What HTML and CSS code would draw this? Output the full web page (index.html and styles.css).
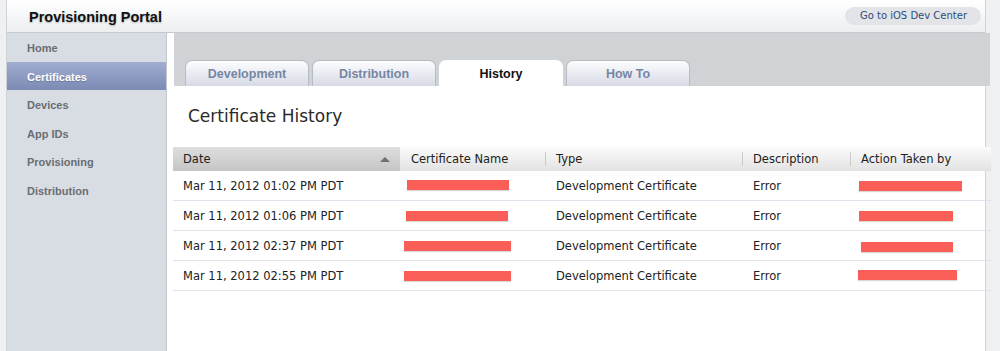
FILE: index.html
```html
<!DOCTYPE html>
<html>
  <head>
    <title>Provisioning Portal</title>
    <link rel="stylesheet" href="styles.css">
  </head>
  <body>
    <div class="page">
      <div class="header">
        <div class="title">Provisioning Portal</div>
        <a class="dev-center" href="#">Go to iOS Dev Center</a>
      </div>

      <div class="layout">
        <ul class="sidebar">
          <li>Home</li>
          <li class="active">Certificates</li>
          <li>Devices</li>
          <li>App IDs</li>
          <li>Provisioning</li>
          <li>Distribution</li>
        </ul>

        <div class="main">
          <div class="tab-band">
            <div class="tab">Development</div>
            <div class="tab">Distribution</div>
            <div class="tab current">History</div>
            <div class="tab">How To</div>
          </div>

          <h2 class="heading">Certificate History</h2>

          <table class="history">
            <thead>
              <tr>
                <th class="col-date sorted">
                  <div class="sort-head">Date <span class="sort-up"></span></div>
                </th>
                <th class="col-name first">Certificate Name</th>
                <th class="col-type">Type</th>
                <th class="col-desc">Description</th>
                <th class="col-action">Action Taken by</th>
              </tr>
            </thead>
            <tbody>
              <tr>
                <td>Mar 11, 2012 01:02 PM PDT</td>
                <td><span class="redact" style="width: 102px; margin-left: -4px; top: -1px"></span></td>
                <td>Development Certificate</td>
                <td>Error</td>
                <td><span class="redact" style="width: 103px; margin-left: -2px; top: 0px"></span></td>
              </tr>
              <tr>
                <td>Mar 11, 2012 01:06 PM PDT</td>
                <td><span class="redact" style="width: 102px; margin-left: -5px"></span></td>
                <td>Development Certificate</td>
                <td>Error</td>
                <td><span class="redact" style="width: 94px; margin-left: -2px"></span></td>
              </tr>
              <tr>
                <td>Mar 11, 2012 02:37 PM PDT</td>
                <td><span class="redact" style="width: 107px; margin-left: -7px"></span></td>
                <td>Development Certificate</td>
                <td>Error</td>
                <td><span class="redact" style="width: 92px; margin-left: 0px; top: 1px"></span></td>
              </tr>
              <tr>
                <td>Mar 11, 2012 02:55 PM PDT</td>
                <td><span class="redact" style="width: 107px; margin-left: -7px"></span></td>
                <td>Development Certificate</td>
                <td>Error</td>
                <td><span class="redact" style="width: 99px; margin-left: -3px; top: -1px"></span></td>
              </tr>
            </tbody>
          </table>
        </div>
      </div>
    </div>
  </body>
</html>
```

FILE: styles.css
```css
body {
  background: #eff0f2;
  color: #222;
  font-family: 'DejaVu Sans', sans-serif;
  margin: 0;
}

.page {
  background: #fff;
  border-left: 1px solid #cfd2d6;
  border-right: 1px solid #cfd2d6;
  margin-left: 6px;
  min-height: 351px;
  width: 978px;
}

.header {
  align-items: center;
  background: linear-gradient(#ffffff, #eceef0);
  border-bottom: 1px solid #c6cad0;
  display: flex;
  height: 32px;
  justify-content: space-between;
  padding-left: 22px;
  padding-right: 4px;
}

.title {
  color: #111;
  font-family: 'Liberation Sans', Arial, sans-serif;
  font-size: 14.5px;
  font-weight: bold;
  padding-top: 1px;
  text-shadow: 0 1px 2px rgba(0,0,0,0.25);
}

.dev-center {
  background: #e2e4e7;
  border-radius: 9px;
  color: #2f4d7c;
  font-size: 10px;
  line-height: 18px;
  margin-bottom: 1px;
  padding: 0 14px 0 15px;
  text-decoration: none;
}

.layout {
  display: flex;
  min-height: 318px;
}

.sidebar {
  background: #d8dde4;
  border-right: 1px solid #c3c8cf;
  list-style: none;
  margin: 0;
  padding: 0;
  width: 159px;
}

.sidebar li {
  color: #6a6d72;
  font-family: 'Liberation Sans', Arial, sans-serif;
  font-size: 11px;
  font-weight: bold;
  height: 28.5px;
  line-height: 30px;
  padding-left: 20px;
}

.sidebar li.active {
  background: linear-gradient(#a1add0, #7c8ab4);
  color: #fff;
  text-shadow: 0 1px 1px rgba(0,0,0,0.2);
}

.main {
  flex: 1;
  min-width: 0;
  padding-left: 6px;
}

.tab-band {
  align-items: flex-end;
  background: #d0d3d6;
  display: flex;
  gap: 3px;
  height: 53px;
  margin-left: 1px;
  margin-right: -5px;
  padding-left: 11px;
}

.tab {
  background: linear-gradient(#fdfdfe, #d6dae6);
  border: 1px solid #b7bbc3;
  border-bottom: none;
  border-radius: 7px 7px 0 0;
  box-sizing: border-box;
  color: #7786a2;
  font-family: 'Liberation Sans', Arial, sans-serif;
  font-size: 12.5px;
  font-weight: bold;
  height: 26px;
  line-height: 27px;
  text-align: center;
  width: 124px;
}

.tab.current {
  background: #fff;
  border-color: #fff;
  color: #111;
}

.heading {
  color: #2a2a2a;
  font-size: 17px;
  font-weight: normal;
  line-height: 20px;
  margin: 20px 0 21px 15px;
}

.history {
  border-collapse: collapse;
  font-size: 11.5px;
  table-layout: fixed;
  width: 818px;
}

.history th {
  background:
    linear-gradient(#cbcbcb, #cbcbcb) left center / 1px 14px no-repeat,
    linear-gradient(#fbfbfb, #e2e2e2);
  font-weight: normal;
  height: 24px;
  padding: 0 0 0 11px;
  text-align: left;
}

.history th.sorted {
  background: linear-gradient(#dedede, #c5c5c5);
  padding-left: 10px;
}

.history th.first {
  background: linear-gradient(#fbfbfb, #e2e2e2);
}

.sort-head {
  align-items: center;
  display: flex;
  justify-content: space-between;
  padding-right: 10px;
}

.sort-up {
  border-bottom: 5px solid #6f6f6f;
  border-left: 5px solid transparent;
  border-right: 5px solid transparent;
  height: 0;
  width: 0;
}

/* widths exclude the cell's left padding */
.col-date { width: 217px; }
.col-name { width: 134px; }
.col-type { width: 186px; }
.col-desc { width: 97px; }
.col-action { width: 130px; }

.history td {
  border-bottom: 1px solid #dfe1eb;
  height: 29px;
  padding: 0 0 0 11px;
  white-space: nowrap;
}

.history td:first-child {
  padding-left: 10px;
}

.redact {
  background: #fa5f57;
  box-shadow: 0 1px 1px rgba(0,0,0,0.15);
  display: inline-block;
  height: 10px;
  position: relative;
  vertical-align: middle;
}
```
